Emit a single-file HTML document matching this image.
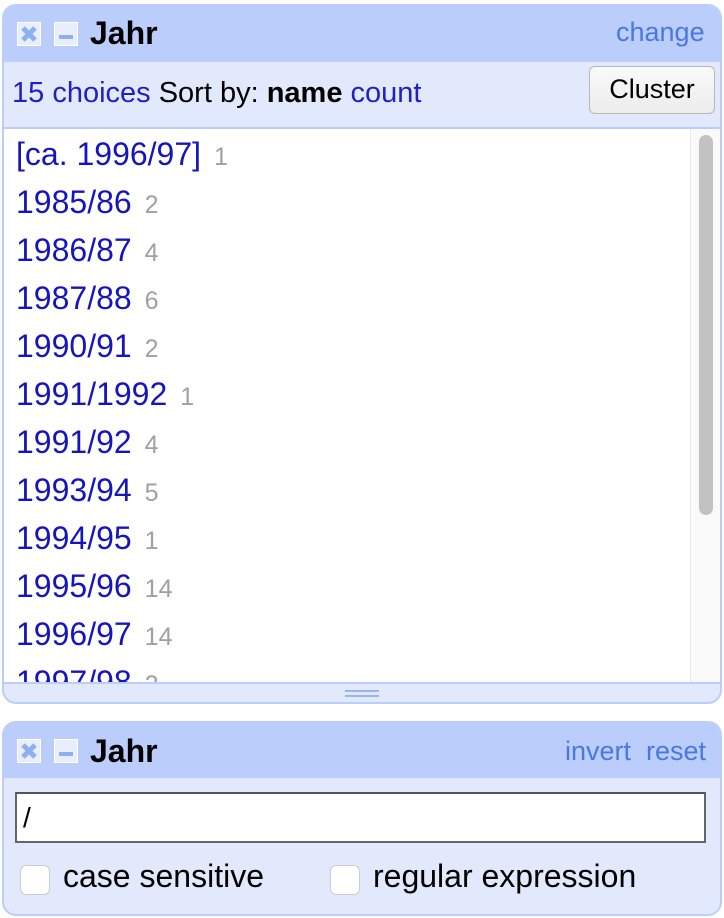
<!DOCTYPE html>
<html><head><style>
*{margin:0;padding:0;box-sizing:border-box}
body{width:724px;height:918px;background:#fff;font-family:"Liberation Sans",Arial,sans-serif;position:relative;overflow:hidden}
.a{position:absolute}
.panel{border:2px solid #bbcdfb;background:#e3e9fc;border-radius:14px;overflow:hidden}
.hdr{background:#bbcdfb}
.ico{width:24px;height:24px;background:#e8eefc;border:1px solid #fff}
.blue{color:#1f1fc8}
.lnk{color:#4a78e0}
.item{position:absolute;left:16px;font-size:32px;color:#1515c0;white-space:nowrap;line-height:36px}
.item span{color:#a0a0a0;font-size:25px;margin-left:13px}
</style></head><body>
<div class="a panel" style="left:2px;top:4px;width:720px;height:700px"></div>
<div class="a hdr" style="left:4px;top:6px;width:716px;height:56px;border-radius:12px 12px 0 0"></div>
<div class="a ico" style="left:17px;top:22px"><svg width="22" height="22"><path d="M5 5L17 17M17 5L5 17" stroke="#8fb0f0" stroke-width="5"/></svg></div>
<div class="a ico" style="left:54px;top:22px"><div style="margin:12px 4px 0;height:4px;background:#8fb0f0"></div></div>
<div class="a" style="left:90px;top:15px;font-size:32px;font-weight:bold">Jahr</div>
<div class="a lnk" style="left:616px;top:17px;font-size:27px">change</div>
<div class="a" style="left:12px;top:77px;font-size:29px"><span class="blue">15 choices</span> Sort by: <b>name</b> <span class="blue">count</span></div>
<div class="a" style="left:589px;top:66px;width:126px;height:48px;border:1.5px solid #b8b8b8;border-radius:6px;background:linear-gradient(#fafafa,#ececec);font-size:27px;text-align:center;line-height:45px">Cluster</div>
<div class="a" style="left:4px;top:127px;width:716px;height:2px;background:#bbcdfb"></div>
<div class="a" style="left:4px;top:129px;width:716px;height:553px;background:#fff;overflow:hidden">
<div class="a" style="left:686px;top:0;width:30px;height:553px;background:#fafafa;border-left:1px solid #e8e8e8"></div>
<div class="a" style="left:695px;top:6px;width:14px;height:380px;background:#c2c2c2;border-radius:7px"></div>
<div class="item" style="left:12px;top:7px">[ca. 1996/97]<span>1</span></div>
<div class="item" style="left:12px;top:55px">1985/86<span>2</span></div>
<div class="item" style="left:12px;top:103px">1986/87<span>4</span></div>
<div class="item" style="left:12px;top:151px">1987/88<span>6</span></div>
<div class="item" style="left:12px;top:199px">1990/91<span>2</span></div>
<div class="item" style="left:12px;top:247px">1991/1992<span>1</span></div>
<div class="item" style="left:12px;top:295px">1991/92<span>4</span></div>
<div class="item" style="left:12px;top:343px">1993/94<span>5</span></div>
<div class="item" style="left:12px;top:391px">1994/95<span>1</span></div>
<div class="item" style="left:12px;top:439px">1995/96<span>14</span></div>
<div class="item" style="left:12px;top:487px">1996/97<span>14</span></div>
<div class="item" style="left:12px;top:535px">1997/98<span>2</span></div>
</div>
<div class="a" style="left:4px;top:682px;width:716px;height:2px;background:#bbcdfb"></div>
<div class="a" style="left:345px;top:690px;width:34px;height:2px;background:#9ab4f0"></div>
<div class="a" style="left:345px;top:695px;width:34px;height:2px;background:#9ab4f0"></div>

<div class="a panel" style="left:2px;top:721px;width:720px;height:195px"></div>
<div class="a hdr" style="left:4px;top:723px;width:716px;height:55px;border-radius:12px 12px 0 0"></div>
<div class="a ico" style="left:17px;top:739px"><svg width="22" height="22"><path d="M5 5L17 17M17 5L5 17" stroke="#8fb0f0" stroke-width="5"/></svg></div>
<div class="a ico" style="left:54px;top:739px"><div style="margin:12px 4px 0;height:4px;background:#8fb0f0"></div></div>
<div class="a" style="left:90px;top:733px;font-size:32px;font-weight:bold">Jahr</div>
<div class="a lnk" style="left:565px;top:736px;font-size:27px">invert&nbsp; reset</div>
<div class="a" style="left:15px;top:792px;width:691px;height:51px;border:2px solid #666;border-top-color:#555;background:#fff;font-size:28px;padding:8px 6px">/</div>
<div class="a" style="left:20px;top:865px;width:30px;height:30px;border:1px solid #ccc;border-radius:6px;background:#fff"></div>
<div class="a" style="left:63px;top:858px;font-size:32px">case sensitive</div>
<div class="a" style="left:330px;top:865px;width:30px;height:30px;border:1px solid #ccc;border-radius:6px;background:#fff"></div>
<div class="a" style="left:373px;top:858px;font-size:32px">regular expression</div>
</body></html>
